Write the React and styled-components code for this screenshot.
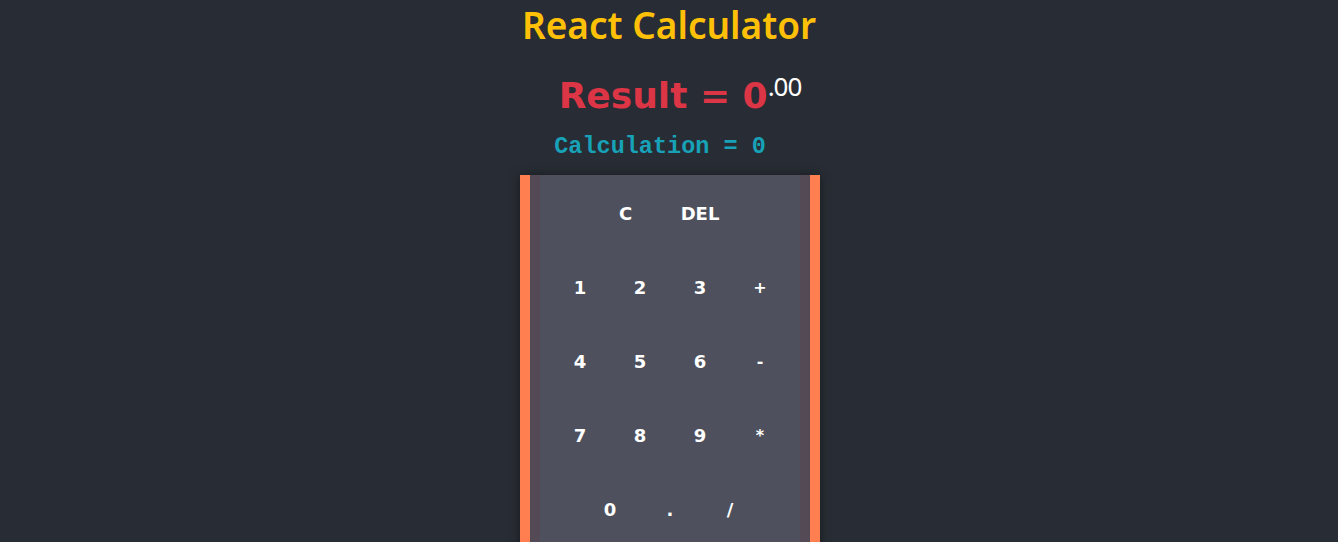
import React, { useState } from 'react';
import styled, { createGlobalStyle } from 'styled-components';

const GlobalStyle = createGlobalStyle`
  html, body {
    margin: 0;
    padding: 0;
    background-color: #282c34;
  }
`;

const Page = styled.div`
  min-height: 100vh;
  background-color: #282c34;
  text-align: center;
  overflow: hidden;
`;

const Title = styled.h1`
  margin: 0;
  font-family: "Noto Sans", "Open Sans", sans-serif;
  font-weight: 600;
  font-size: 37px;
  line-height: 50px;
  color: #ffc107;
`;

const Result = styled.div`
  margin-top: 20px;
  font-family: "Comic Sans MS", "DejaVu Sans", sans-serif;
  font-weight: bold;
  font-size: 36px;
  line-height: 52px;
  color: #dc3545;
  padding-left: 22px;

  sup {
    font-family: "Noto Sans", "Open Sans", sans-serif;
    font-weight: 400;
    font-size: 26px;
    color: #ffffff;
    vertical-align: 12px;
    line-height: 0;
    letter-spacing: -1px;
  }
`;

const Calculation = styled.div`
  margin-top: 11px;
  padding-right: 18px;
  font-family: "Liberation Mono", "Courier New", monospace;
  font-weight: bold;
  font-size: 23.5px;
  line-height: 28px;
  color: #17a2b8;
`;

const Calculator = styled.div`
  width: 260px;
  margin: 14px auto 0;
  padding: 12px 10px 30px;
  background-color: #4e515d;
  border-left: 10px solid #ff7f50;
  border-right: 10px solid #ff7f50;
  box-shadow: inset 10px 0 0 #534a55, inset -10px 0 0 #534a55, 0 0 10px rgba(0, 0, 0, 0.4);
  display: flex;
  flex-direction: column;
  gap: 20px;
  transform: translateX(1px);
`;

const Row = styled.div`
  display: flex;
  justify-content: center;
  gap: 10px;
`;

const Key = styled.button`
  background: transparent;
  border: none;
  width: ${(p) => (p.$wide ? 'auto' : '50px')};
  padding: ${(p) => (p.$wide ? '15px 20px' : '15px 0')};
  font-family: "Comic Sans MS", "DejaVu Sans", sans-serif;
  font-weight: bold;
  font-size: ${(p) => (p.$small ? '16px' : '18px')};
  line-height: 24px;
  color: #ffffff;
  cursor: pointer;
`;

const rows = [
  ['C', 'DEL'],
  ['1', '2', '3', '+'],
  ['4', '5', '6', '-'],
  ['7', '8', '9', '*'],
  ['0', '.', '/'],
];

export default function App() {
  const [calc, setCalc] = useState('0');

  const press = (k) => {
    if (k === 'C') return setCalc('0');
    if (k === 'DEL') return setCalc(calc.length > 1 ? calc.slice(0, -1) : '0');
    setCalc(calc === '0' ? k : calc + k);
  };

  return (
    <Page>
      <GlobalStyle />
      <Title>React Calculator</Title>
      <Result>
        Result = 0<sup>.00</sup>
      </Result>
      <Calculation>Calculation = {calc}</Calculation>
      <Calculator>
        {rows.map((row, i) => (
          <Row key={i}>
            {row.map((k) => (
              <Key
                key={k}
                $wide={k.length > 1}
                $small={'+-*'.includes(k)}
                onClick={() => press(k)}
              >
                {k}
              </Key>
            ))}
          </Row>
        ))}
      </Calculator>
    </Page>
  );
}
